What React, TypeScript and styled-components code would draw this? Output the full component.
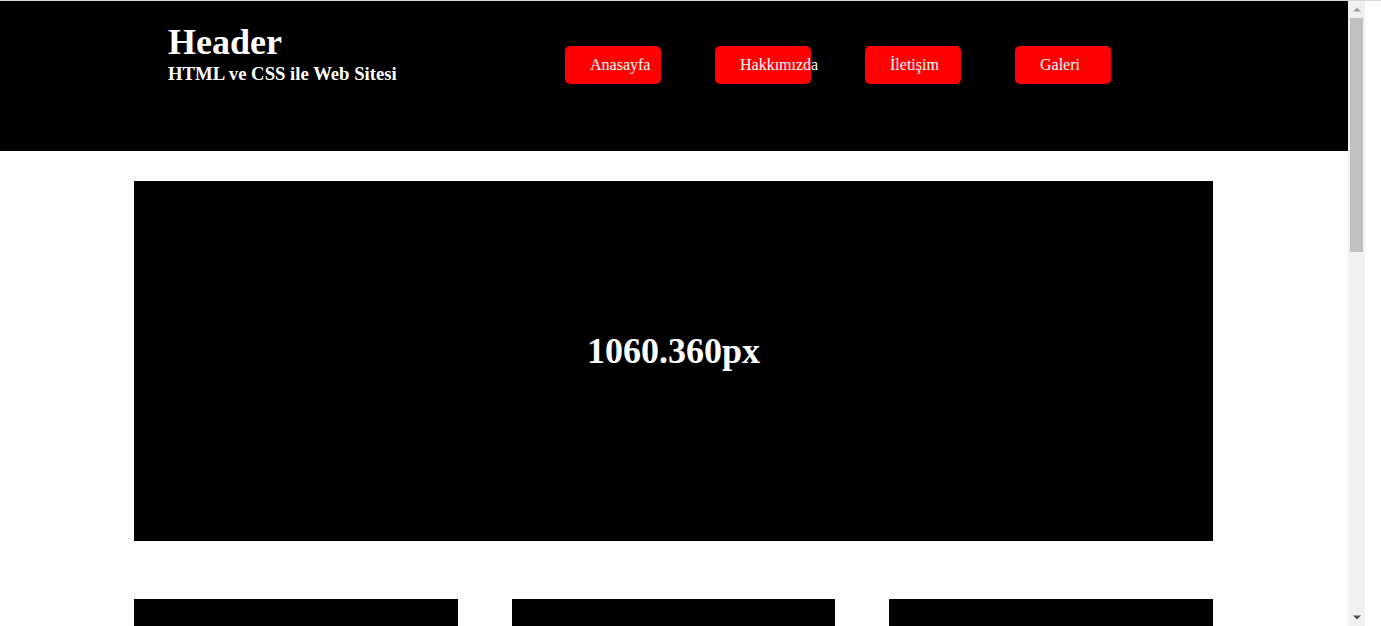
import React from "react";
import styled, { createGlobalStyle } from "styled-components";

const GlobalStyle = createGlobalStyle`
  html, body {
    margin: 0;
    padding: 0;
    overflow: hidden;
    background: #ffffff;
  }
  body {
    font-family: "Liberation Serif", "Times New Roman", serif;
  }
  * { box-sizing: border-box; }
`;

const Frame = styled.div`
  display: flex;
  width: 1381px;
  height: 626px;
  border-top: 1px solid #d6d6d6;
  overflow: hidden;
  background: #ffffff;
`;

const Page = styled.div`
  flex: 0 0 1348px;
  display: flex;
  flex-direction: column;
`;

const HeaderBar = styled.header`
  flex: 0 0 150px;
  background: #000000;
  color: #ffffff;
`;

const Container = styled.div`
  width: 1079px;
  margin-left: 134px;
`;

const HeaderInner = styled(Container)`
  display: flex;
  align-items: flex-start;
  padding-top: 20px;
`;

const Brand = styled.div`
  flex: 0 0 431px;
  padding-left: 34px;
`;

const Title = styled.h1`
  margin: 0;
  font-size: 36px;
  font-weight: bold;
  line-height: normal;
`;

const Subtitle = styled.h3`
  margin: 0;
  font-size: 18.72px;
  font-weight: bold;
  line-height: normal;
`;

const Nav = styled.nav`
  display: flex;
  gap: 54px;
  margin-top: 25px;
`;

const NavButton = styled.a`
  display: block;
  width: 96px;
  height: 38px;
  padding: 10px 0 10px 25px;
  background: #ff0000;
  border-radius: 5px;
  color: #ffffff;
  font-size: 16px;
  line-height: 18px;
  white-space: nowrap;
  text-decoration: none;
`;

const Main = styled(Container)`
  margin-top: 30px;
  display: flex;
  flex-direction: column;
`;

const Hero = styled.section`
  height: 360px;
  background: #000000;
  display: flex;
  align-items: center;
  justify-content: center;
`;

const HeroText = styled.h1`
  margin: 0 0 20px;
  color: #ffffff;
  font-size: 36px;
  font-weight: bold;
  line-height: normal;
`;

const CardRow = styled.div`
  display: grid;
  grid-template-columns: repeat(3, 1fr);
  gap: 54px;
  margin-top: 58px;
`;

const Card = styled.div`
  height: 200px;
  background: #000000;
`;

const Scrollbar = styled.div`
  flex: 0 0 17px;
  background: #f1f1f1;
  display: flex;
  flex-direction: column;
`;

const ArrowButton = styled.div`
  flex: 0 0 17px;
  display: flex;
  align-items: center;
  justify-content: center;
`;

const Track = styled.div`
  flex: 1;
  padding: 0 2px;
`;

const Thumb = styled.div`
  height: 234px;
  background: #c1c1c1;
`;

const Spacer = styled.div`
  flex: 1;
  background: #ffffff;
`;

const Arrow = ({ up, color }: { up?: boolean; color: string }) => (
  <svg width="8" height="5" viewBox="0 0 8 5">
    {up ? (
      <polygon points="0,4.5 4,0.5 8,4.5" fill={color} />
    ) : (
      <polygon points="0,0.5 8,0.5 4,4.5" fill={color} />
    )}
  </svg>
);

const navItems = ["Anasayfa", "Hakkımızda", "İletişim", "Galeri"];

export default function App() {
  return (
    <>
      <GlobalStyle />
      <Frame>
        <Page>
          <HeaderBar>
            <HeaderInner>
              <Brand>
                <Title>Header</Title>
                <Subtitle>HTML ve CSS ile Web Sitesi</Subtitle>
              </Brand>
              <Nav>
                {navItems.map((item) => (
                  <NavButton key={item} href="#">
                    {item}
                  </NavButton>
                ))}
              </Nav>
            </HeaderInner>
          </HeaderBar>
          <Main>
            <Hero>
              <HeroText>1060.360px</HeroText>
            </Hero>
            <CardRow>
              <Card />
              <Card />
              <Card />
            </CardRow>
          </Main>
        </Page>
        <Scrollbar>
          <ArrowButton>
            <Arrow up color="#a3a3a3" />
          </ArrowButton>
          <Track>
            <Thumb />
          </Track>
          <ArrowButton>
            <Arrow color="#505050" />
          </ArrowButton>
        </Scrollbar>
        <Spacer />
      </Frame>
    </>
  );
}
